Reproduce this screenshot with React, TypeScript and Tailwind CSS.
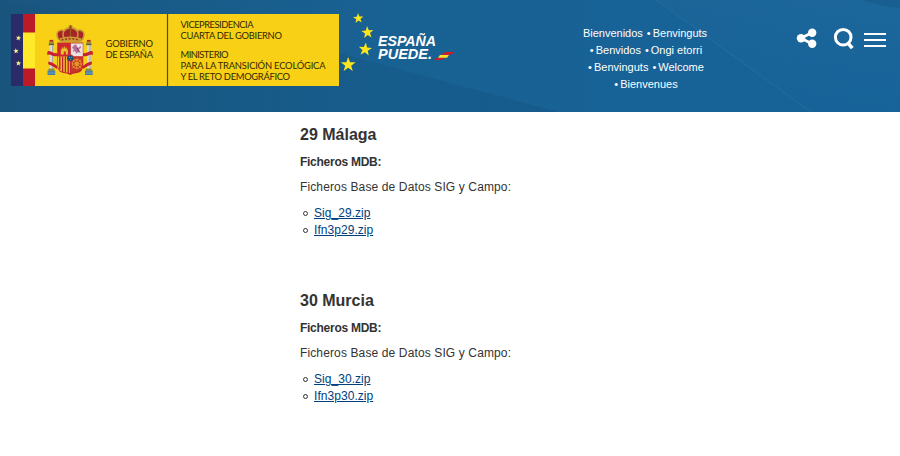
import React from "react";

const STAR = "0,-1 0.235,-0.324 0.951,-0.309 0.38,0.124 0.588,0.809 0,0.4 -0.588,0.809 -0.38,0.124 -0.951,-0.309 -0.235,-0.324";

function Star({ x, y, r, fill = "#fce51c", turn = 0 }: { x: number; y: number; r: number; fill?: string; turn?: number }) {
  return <polygon points={STAR} fill={fill} transform={`translate(${x} ${y}) rotate(${turn}) scale(${r})`} />;
}

function Pillar({ x }: { x: number }) {
  return (
    <g transform={`translate(${x} 14.6)`}>
      <rect x="-2.4" y="26.6" width="4.8" height="2.4" fill="#a98a2c" />
      <rect x="-1.8" y="25.3" width="3.6" height="1.6" fill="#b3202b" />
      <rect x="-2.6" y="29" width="5.2" height="1.7" fill="#4d5b50" />
      <rect x="-1.8" y="30.7" width="3.6" height="24" fill="#d9d9cf" />
      <rect x="0.7" y="30.7" width="1" height="24" fill="#a4a7a1" />
      <rect x="-3" y="54" width="6" height="2" fill="#8d8a3a" />
      <rect x="-3.8" y="56" width="7.6" height="4.4" fill="#2b6d9c" />
      <path d="M-3.6 57.5h7.2M-3.6 59.2h7.2" stroke="#a9c8d2" strokeWidth=".6" />
    </g>
  );
}

function CoatOfArms() {
  return (
    <svg viewBox="35 14 64 72" className="h-[72px] w-[64px] shrink-0">
      <Pillar x={51.4} />
      <Pillar x={88.8} />
      <g transform="translate(-.2 13.4)">
        <path d="M47.5 38.5q1-2 4.5 0t6 1.2v3q-4 .8-6.5-.8t-4 0zM48.5 48q4 .4 9 4.5v3q-4-2.5-9-4.6zM93 38.5q-1-2-4.500 0t-6 1.200v3q4 .8 6.500-.8t4 0zM92 48q-4 .4-9 4.500v3q4-2.500 9-4.600z" fill="#c8202c" />
        <path d="M57.5 29h26V50.500q0 8.500-6.500 9-4.500.3-6.500 2-2-1.700-6.500-2-6.500-.5-6.500-9z" fill="#c2272c" />
        <path d="M58 30h12v13H58z" fill="#cf2730" />
        <path d="M61 41v-5h1v-2h1v1h1v-2h1v2h1v-1h1v2h1v5h-2v-3h-2v3z" fill="#ecc32b" />
        <path d="M71 30h12v13H71z" fill="#ece2dc" />
        <path d="M74 32q3-2 3 1t4-.5q1 2-2 3l2 4-3-1-1 2-2-3-2 1 1-3-2-1z" fill="#b66d99" />
        <path d="M77 34l2 4" stroke="#7b3663" />
        <path d="M58 43h12v16.500l-6-1q-6-1-6-8z" fill="#f2c92a" />
        <path d="M60 43v13M62.800 43v15.500M65.600 43v16M68.400 43v17" stroke="#bd2329" strokeWidth="1.400" />
        <path d="M71 43h12v8q0 6.500-6 7.500l-6 1z" fill="#c7342c" />
        <g fill="none" stroke="#e4a02a" strokeWidth=".9">
          <circle cx="77" cy="50.500" r="4.500" />
          <circle cx="77" cy="50.500" r="1.700" />
          <path d="M72.500 46l9 9M81.500 46l-9 9M77 45v11M72 50.500h10" />
        </g>
        <circle cx="70.500" cy="44.700" r="3.500" fill="#c9353c" />
        <circle cx="70.500" cy="44.700" r="2.900" fill="#174e7e" />
        <path d="M69.300 44h.9M71 44h.9M70.200 46h.9" stroke="#ceba56" strokeWidth=".8" />
      </g>
      <g transform="translate(0 4.600) scale(1 1.200)">
        <path d="M59.500 30q-4-5-1.500-7.500 2.500-2.300 6-.8 1.500-2.500 6.500-2.500t6.500 2.500q3.500-1.500 6 .8 2.500 2.500-1.500 7.500z" fill="#a82328" />
        <path d="M59 29.500q-3.500-4.500-1-7 2.500-2 6-.7M82 29.500q3.500-4.500 1-7-2.500-2-6-.7M64.500 29q-3-5 0-7.500 2-2.200 6-2.200t6 2.200q3 2.500 0 7.500" fill="none" stroke="#c99a30" strokeWidth="1.500" />
        <path d="M70.500 17v12M68.800 18h3.500" stroke="#9a6322" strokeWidth="1" />
        <circle cx="70.500" cy="19.400" r="1.100" fill="#963d22" />
        <path d="M59.500 28q11-3 22 0l-.5 4q-10.500-2-21 0z" fill="#c99b31" />
        <path d="M61.500 29.500q9-2 18 0" fill="none" stroke="#a63125" strokeWidth="1.300" strokeDasharray="2 1.600" />
      </g>
    </svg>
  );
}

function GovernmentLogo() {
  return (
    <div className="mt-[14px] ml-[11px] flex h-[72px] w-[328px] shrink-0 bg-[#f8d117]">
      <svg viewBox="0 0 24 72" className="h-[72px] w-[24px] shrink-0">
        <path fill="#2a2c69" d="M0 0h12v72H0z" />
        <path fill="#bb1b26" d="M12 0h12v72H12z" />
        <path fill="#ffe92b" d="M12 18.500h12v36H12z" />
        <Star x={7.500} y={24} r={2.900} fill="#fff58c" turn={12} />
        <Star x={5} y={37} r={2.900} fill="#fff58c" turn={-8} />
        <Star x={7.500} y={49.300} r={2.900} fill="#fff58c" turn={8} />
      </svg>
      <CoatOfArms />
      <svg viewBox="99 14 240 72" className="h-[72px] w-[240px] shrink-0 font-['Lato',sans-serif] text-[9.400px] font-normal">
        <path d="M167.500 14v72" stroke="#31592f" strokeWidth="1.200" />
        <g fill="#302900">
          <text x="105.500" y="47" textLength="47.500">GOBIERNO</text>
          <text x="105.500" y="58" textLength="47.500">DE ESPAÑA</text>
          <text x="180.500" y="28" textLength="73">VICEPRESIDENCIA</text>
          <text x="180.500" y="39" textLength="101.500">CUARTA DEL GOBIERNO</text>
          <text x="180.500" y="57.500" textLength="48">MINISTERIO</text>
          <text x="180.500" y="69" textLength="145">PARA LA TRANSICIÓN ECOLÓGICA</text>
          <text x="180.500" y="79.700" textLength="109.500">Y EL RETO DEMOGRÁFICO</text>
        </g>
      </svg>
    </div>
  );
}

function CampaignLogo() {
  return (
    <svg viewBox="339 0 121 112" className="h-[112px] w-[121px] shrink-0 font-['Liberation_Sans',sans-serif] text-[15px] font-bold italic">
      <Star x={358.300} y={18.400} r={5.400} turn={-4} />
      <Star x={367.500} y={32.500} r={6.400} turn={-4} />
      <Star x={365.200} y={49.500} r={7} turn={6} />
      <Star x={348.200} y={64.700} r={7.800} />
      <g fill="#ffffff">
        <text x="378" y="45.500" textLength="58" lengthAdjust="spacingAndGlyphs">ESPAÑA</text>
        <text x="378" y="59.300" textLength="54" lengthAdjust="spacingAndGlyphs">PUEDE.</text>
      </g>
      <path d="M441.500 54.800q2-2.800 6-2.800h7q-2 2.800-6 2.800zM434 60q2-2.200 5-2.200h6q-2 2.200-5 2.200z" fill="#d5192b" />
      <path d="M438 57.800l2-2.900h9l-2 2.900z" fill="#ffdf24" />
    </svg>
  );
}

function Backdrop() {
  return (
    <svg viewBox="0 0 900 112" className="absolute inset-0 h-[112px] w-[900px]">
      <defs>
        <linearGradient id="shade">
          <stop offset="0" stopColor="#0a2f4c" stopOpacity=".05" />
          <stop offset="1" stopColor="#0a2f4c" stopOpacity=".12" />
        </linearGradient>
        <linearGradient id="glow" x1="1" y1="0" x2=".6" y2="1">
          <stop offset="0" stopColor="#ffffff" stopOpacity=".025" />
          <stop offset="1" stopColor="#ffffff" stopOpacity="0" />
        </linearGradient>
      </defs>
      <path d="M0 0L339 53 558 112H0z" fill="url(#shade)" />
      <path d="M656 0L811 112H900V0z" fill="url(#glow)" />
      <path d="M656 0L811 112" stroke="#ffffff" strokeOpacity=".04" strokeWidth="1.500" />
      <path d="M862 0q18 6 38 8V0z" fill="#0d3f68" fillOpacity=".2" />
    </svg>
  );
}

function Greeting({ words, first = false }: { words: string[]; first?: boolean }) {
  return (
    <p className={first ? "flex justify-center gap-[4px] pr-[2px]" : "flex justify-center gap-[4px]"}>
      {words.map((word, i) => (
        <span key={word} className="flex gap-[2px]">
          {(!first || i > 0) && <span>•</span>}
          {word}
        </span>
      ))}
    </p>
  );
}

function Header() {
  return (
    <header className="relative h-[112px] bg-[linear-gradient(90deg,#1a5680,#186192_40%,#176297_75%,#166399)]">
      <Backdrop />
      <div className="relative flex h-[112px]">
        <GovernmentLogo />
        <CampaignLogo />
        <div className="mt-[25px] ml-[105px] w-[162px] font-['Liberation_Sans',Arial,sans-serif] text-[11px] leading-[17px] text-white">
          <Greeting first words={["Bienvenidos", "Benvinguts"]} />
          <Greeting words={["Benvidos", "Ongi etorri"]} />
          <Greeting words={["Benvinguts", "Welcome"]} />
          <Greeting words={["Bienvenues"]} />
        </div>
        <svg viewBox="780 10 120 60" className="mt-[10px] ml-[53px] h-[60px] w-[120px] shrink-0" fill="none" stroke="white">
          <path d="M812 32.500l-11 5.700 11 5.500" strokeWidth="2.700" />
          <g fill="white" stroke="none">
            <circle cx="812.200" cy="32.800" r="4.200" />
            <circle cx="801" cy="38.200" r="4.200" />
            <circle cx="812.200" cy="43.700" r="4.200" />
          </g>
          <circle cx="843.200" cy="37.200" r="7.800" strokeWidth="3" />
          <path d="M848 43.200l4.300 5" strokeWidth="3.600" />
          <path d="M864 34h22M864 40h22M864 46h22" strokeWidth="2" />
        </svg>
      </div>
    </header>
  );
}

function Province({ title, files }: { title: string; files: string[] }) {
  return (
    <section className="h-[166px]">
      <h2 className="text-[16px] leading-[20px] font-bold">{title}</h2>
      <h3 className="mt-[9px] text-[12px] leading-[17px] font-bold tracking-[-0.27px]">Ficheros MDB:</h3>
      <p className="mt-[8px] text-[12px] leading-[17px] tracking-[0.125px]">Ficheros Base de Datos SIG y Campo:</p>
      <ul className="mt-[9px] text-[12px] leading-[17px]">
        {files.map((file) => (
          <li key={file} className="flex items-center">
            <span className="mr-[6px] ml-[3px] size-[5px] rounded-full border border-[#333333]" />
            <a href="#" className="tracking-[0.05px] text-[#004080] underline">{file}</a>
          </li>
        ))}
      </ul>
    </section>
  );
}

export default function App() {
  return (
    <div className="min-h-[456px] w-[900px] overflow-hidden bg-white">
      <Header />
      <main className="ml-[300px] pt-[13px] font-['Liberation_Sans',Arial,sans-serif] text-[#333333]">
        <Province title="29 Málaga" files={["Sig_29.zip", "Ifn3p29.zip"]} />
        <Province title="30 Murcia" files={["Sig_30.zip", "Ifn3p30.zip"]} />
      </main>
    </div>
  );
}
